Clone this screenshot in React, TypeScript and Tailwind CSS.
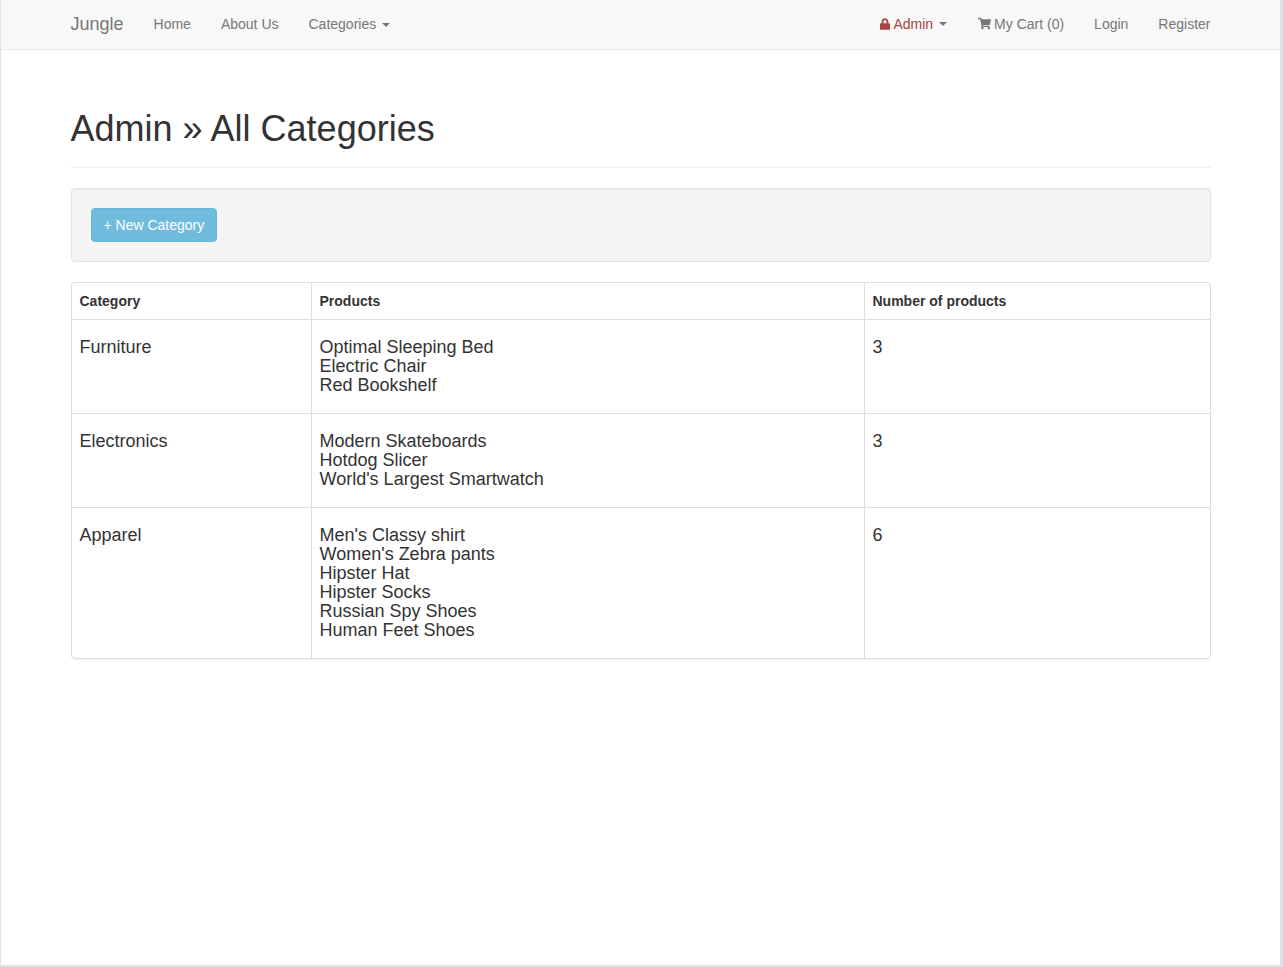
import { FaLock, FaShoppingCart } from "react-icons/fa";

function Caret() {
  return <span className="ml-[6px] inline-block h-0 w-0 border-x-4 border-t-4 border-x-transparent border-t-current align-middle" />;
}

const rows = [
  { category: "Furniture", products: ["Optimal Sleeping Bed", "Electric Chair", "Red Bookshelf"], count: 3 },
  { category: "Electronics", products: ["Modern Skateboards", "Hotdog Slicer", "World's Largest Smartwatch"], count: 3 },
  {
    category: "Apparel",
    products: ["Men's Classy shirt", "Women's Zebra pants", "Hipster Hat", "Hipster Socks", "Russian Spy Shoes", "Human Feet Shoes"],
    count: 6,
  },
];

export default function App() {
  return (
    <div className="box-border h-[967px] w-[1283px] overflow-hidden border-b-2 border-l border-r-[3px] border-[#e3e1e8] bg-white font-['Liberation_Sans',Arial,sans-serif] text-sm text-[#333]">
      <nav className="h-[50px] border-b border-[#e7e7e7] bg-[#f8f8f8] text-[#777]">
        <div className="mx-auto flex h-[47px] w-[1140px] items-center justify-between leading-5">
          <div className="flex items-center">
            <span className="mr-[30px] text-lg">Jungle</span>
            <span className="mr-[30px]">Home</span>
            <span className="mr-[30px]">About Us</span>
            <span>Categories<Caret /></span>
          </div>
          <div className="flex items-center">
            <span className="mr-[31px] flex items-center text-[#a94442]">
              <FaLock className="mr-[3px] h-3 w-[10px]" />
              Admin
              <span className="flex items-center text-[#777]"><Caret /></span>
            </span>
            <span className="mr-[30px] flex items-center">
              <FaShoppingCart className="mr-[3px] size-[13px]" />
              My Cart (0)
            </span>
            <span className="mr-[30px]">Login</span>
            <span>Register</span>
          </div>
        </div>
      </nav>
      <main className="mx-auto w-[1140px]">
        <div className="mt-[41px] mb-5 border-b border-[#eee] pt-[18px] pb-[18px]">
          <h1 className="text-4xl leading-10 font-normal">Admin » All Categories</h1>
        </div>
        <div className="mb-5 h-[74px] rounded border border-[#e3e3e3] bg-[#f5f5f5] p-[19px] shadow-[inset_0_1px_1px_rgba(0,0,0,0.05)]">
          <button className="block h-[34px] rounded border border-[#62b7da] bg-[#71bcdc] px-3 text-white">+ New Category</button>
        </div>
        <div className="overflow-hidden rounded border border-[#ddd] shadow-[0_1px_1px_rgba(0,0,0,0.05)]">
          <table className="w-full table-fixed border-separate border-spacing-0">
            <colgroup>
              <col className="w-[239px]" />
              <col className="w-[553px]" />
              <col />
            </colgroup>
            <thead>
              <tr className="h-[37px] text-left">
                <th className="border-b border-[#ddd] px-2 font-bold">Category</th>
                <th className="border-b border-l border-[#ddd] px-2 font-bold">Products</th>
                <th className="border-b border-l border-[#ddd] px-2 font-bold">Number of products</th>
              </tr>
            </thead>
            <tbody className="text-lg leading-[19px]">
              {rows.map((row, i) => {
                const bottom = i < rows.length - 1 ? "border-b border-[#ddd]" : "";
                return (
                  <tr key={row.category}>
                    <td className={`px-2 py-[18px] align-top ${bottom}`}>{row.category}</td>
                    <td className={`border-l border-[#ddd] px-2 py-[18px] align-top ${bottom}`}>
                      {row.products.map((p) => (
                        <div key={p}>{p}</div>
                      ))}
                    </td>
                    <td className={`border-l border-[#ddd] px-2 py-[18px] align-top ${bottom}`}>{row.count}</td>
                  </tr>
                );
              })}
            </tbody>
          </table>
        </div>
      </main>
    </div>
  );
}
